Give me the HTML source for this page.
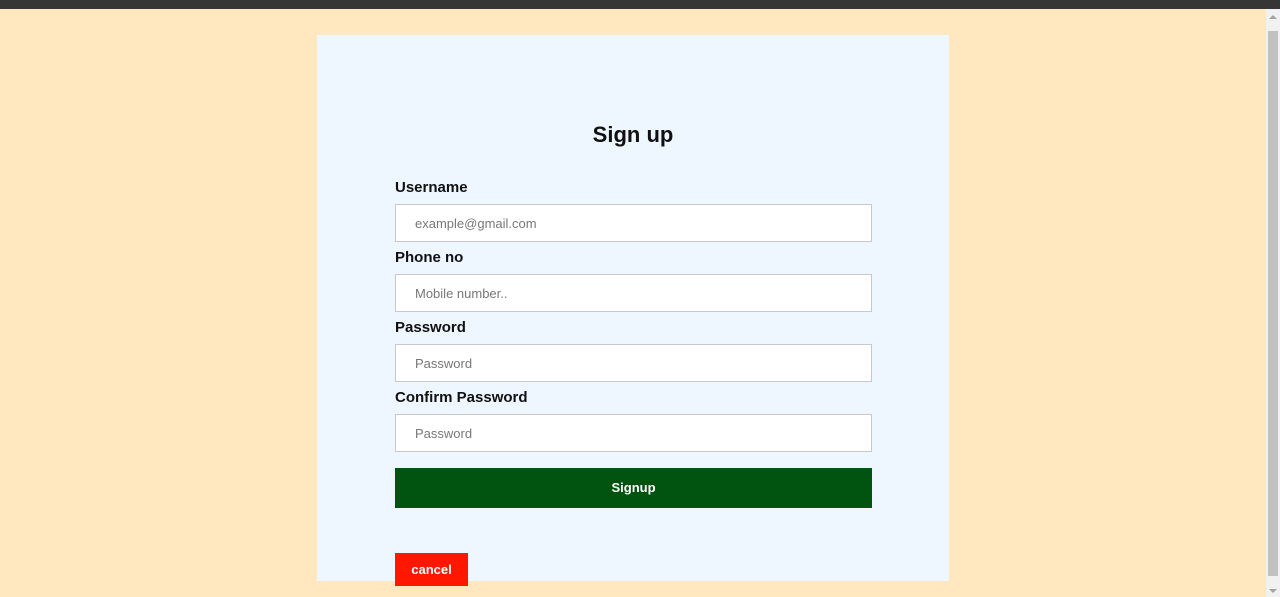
<!DOCTYPE html>
<html><head><style>
*{box-sizing:border-box;margin:0;padding:0}
body{width:1280px;height:597px;overflow:hidden;background:#ffe8c0;font-family:"Liberation Sans",Arial,sans-serif;position:relative}
.top{position:absolute;left:0;top:0;width:1280px;height:9px;background:#363636}
.sb{position:absolute;right:0;top:9px;width:14px;height:588px;background:#f1f1f1}
.thumb{position:absolute;right:2px;top:22px;width:10px;height:545px;background:#c1c1c1}
.up{position:absolute;left:3px;top:6px;width:0;height:0;border-left:4px solid transparent;border-right:4px solid transparent;border-bottom:4px solid #a3a3a3}
.dn{position:absolute;left:3px;bottom:4px;width:0;height:0;border-left:4px solid transparent;border-right:4px solid transparent;border-top:4px solid #a3a3a3}
.card{position:absolute;left:317px;top:35px;width:632px;height:546px;background:#eef6ff}
h1{position:absolute;left:0;width:632px;top:87px;text-align:center;font-size:22px;font-weight:bold;color:#111}
.lbl{position:absolute;left:78px;font-size:15px;font-weight:bold;color:#111}
.in{position:absolute;left:78px;width:477px;height:38px;background:#fff;border:1px solid #c8c8c8;font-size:13px;color:#777;padding-left:19px;line-height:38px}
.btn{position:absolute;left:78px;top:433px;width:477px;height:40px;background:#00540f;color:#fff;font-size:13px;font-weight:bold;text-align:center;line-height:40px}
.cancel{position:absolute;left:395px;top:553px;width:73px;height:33px;background:#ff1700;color:#fff;font-size:13px;font-weight:bold;text-align:center;line-height:33px}
</style></head><body>
<div class="top"></div>
<div class="sb"><div class="up"></div><div class="thumb"></div><div class="dn"></div></div>
<div class="card">
<h1>Sign up</h1>
<div class="lbl" style="top:144px">Username</div>
<div class="in" style="top:169px">example@gmail.com</div>
<div class="lbl" style="top:214px">Phone no</div>
<div class="in" style="top:239px">Mobile number..</div>
<div class="lbl" style="top:284px">Password</div>
<div class="in" style="top:309px">Password</div>
<div class="lbl" style="top:354px">Confirm Password</div>
<div class="in" style="top:379px">Password</div>
<div class="btn">Signup</div>
</div>
<div class="cancel">cancel</div>
</body></html>
